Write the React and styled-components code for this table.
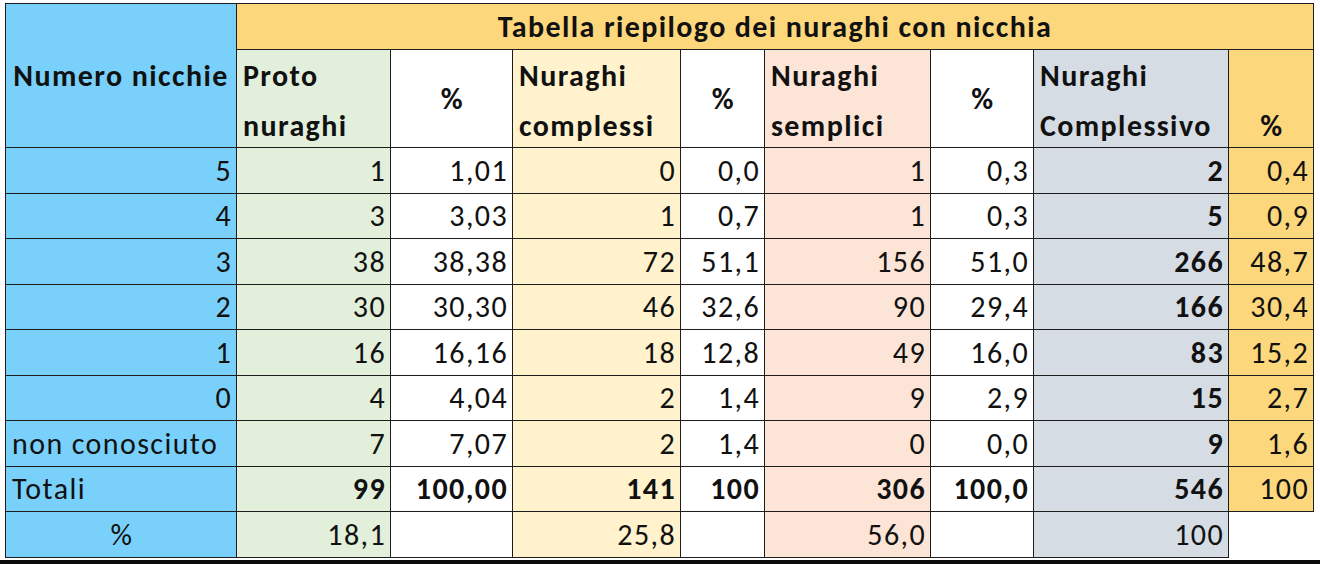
import React from 'react';
import styled, { createGlobalStyle } from 'styled-components';

const GlobalStyle = createGlobalStyle`
  html, body {
    margin: 0;
    padding: 0;
    background: #ffffff;
  }
  body {
    font-family: Carlito, Calibri, Lato, "Liberation Sans", sans-serif;
    color: #111111;
  }
`;

// colonne: etichetta, proto, %, complessi, %, semplici, %, complessivo, %
const WIDTHS = [231, 154, 122, 168, 84, 166, 103, 195, 85];

const BLUE = '#79d1fb';
const GREEN = '#e2efda';
const YELLOW = '#fff2cc';
const PINK = '#fce4d6';
const GREY = '#d6dce4';
const GOLD = '#fdd77c';
const WHITE = '#ffffff';

const COL_BG = [BLUE, GREEN, WHITE, YELLOW, WHITE, PINK, WHITE, GREY, GOLD];

const rows = [
  ['5', '1', '1,01', '0', '0,0', '1', '0,3', '2', '0,4'],
  ['4', '3', '3,03', '1', '0,7', '1', '0,3', '5', '0,9'],
  ['3', '38', '38,38', '72', '51,1', '156', '51,0', '266', '48,7'],
  ['2', '30', '30,30', '46', '32,6', '90', '29,4', '166', '30,4'],
  ['1', '16', '16,16', '18', '12,8', '49', '16,0', '83', '15,2'],
  ['0', '4', '4,04', '2', '1,4', '9', '2,9', '15', '2,7'],
  ['non conosciuto', '7', '7,07', '2', '1,4', '0', '0,0', '9', '1,6'],
];

const totals = ['Totali', '99', '100,00', '141', '100', '306', '100,0', '546', '100'];
const percents = ['%', '18,1', '', '25,8', '', '56,0', '', '100', ''];

const Page = styled.div`
  height: 564px;
  display: flex;
  flex-direction: column;
  overflow: hidden;
`;

const Sheet = styled.div`
  flex: 1;
  padding: 3px 0 0 5px;
`;

const Grid = styled.table`
  border-collapse: collapse;
  table-layout: fixed;
  width: ${WIDTHS.reduce((a, b) => a + b, 0)}px;
  font-size: 30px;
  letter-spacing: 1.4px;
`;

const TitleRow = styled.tr`
  height: 46px;
`;

const HeadRow = styled.tr`
  height: 97px;
`;

const DataRow = styled.tr`
  height: 45.5px;
`;

const Corner = styled.th`
  background: ${BLUE};
  border: 1px solid #1d1d1d;
  font-weight: 700;
  text-align: center;
  vertical-align: middle;
  padding: 0;
  white-space: nowrap;
`;

const Title = styled.th`
  background: ${GOLD};
  border: 1px solid #1d1d1d;
  font-weight: 700;
  text-align: center;
  vertical-align: middle;
  padding: 0;
`;

const HeadCell = styled.th`
  background: ${(p) => p.$bg};
  border: 1px solid #1d1d1d;
  font-weight: 700;
  padding: 0 4px 0 6px;
  text-align: ${(p) => p.$align || 'left'};
`;

const HeadStack = styled.div`
  height: 97px;
  box-sizing: border-box;
  display: flex;
  flex-direction: column;
  justify-content: ${(p) => p.$justify};
  padding: ${(p) => p.$pad || '0'};
  line-height: 1.2;
`;

const Cell = styled.td`
  background: ${(p) => p.$bg};
  border: ${(p) => (p.$bare ? 'none' : '1px solid #1d1d1d')};
  font-weight: ${(p) => (p.$bold ? 700 : 400)};
  text-align: ${(p) => p.$align || 'right'};
  vertical-align: middle;
  padding: 0 4px 0 6px;
  white-space: nowrap;
  overflow: hidden;
`;

const BottomBar = styled.div`
  height: 4px;
  background: #0b0b0b;
`;

const headers = [
  { lines: ['Proto', 'nuraghi'], bg: GREEN },
  { lines: ['%'], bg: WHITE },
  { lines: ['Nuraghi', 'complessi'], bg: YELLOW },
  { lines: ['%'], bg: WHITE },
  { lines: ['Nuraghi', 'semplici'], bg: PINK },
  { lines: ['%'], bg: WHITE },
  { lines: ['Nuraghi', 'Complessivo'], bg: GREY },
  { lines: ['%'], bg: GOLD, bottom: true },
];

const Header = ({ h }) => {
  if (h.lines.length === 2) {
    return (
      <HeadCell $bg={h.bg}>
        <HeadStack $justify="space-between" $pad="8px 0 3px">
          <span>{h.lines[0]}</span>
          <span>{h.lines[1]}</span>
        </HeadStack>
      </HeadCell>
    );
  }
  return (
    <HeadCell $bg={h.bg} $align="center">
      <HeadStack $justify={h.bottom ? 'flex-end' : 'center'} $pad={h.bottom ? '0 0 3px' : '0'}>
        <span>{h.lines[0]}</span>
      </HeadStack>
    </HeadCell>
  );
};

const App = () => {
  return (
    <Page>
      <GlobalStyle />
      <Sheet>
        <Grid>
          <colgroup>
            {WIDTHS.map((w, i) => (
              <col key={i} style={{ width: w }} />
            ))}
          </colgroup>
          <thead>
            <TitleRow>
              <Corner rowSpan={2}>Numero nicchie</Corner>
              <Title colSpan={8}>Tabella riepilogo dei nuraghi con nicchia</Title>
            </TitleRow>
            <HeadRow>
              {headers.map((h, i) => (
                <Header key={i} h={h} />
              ))}
            </HeadRow>
          </thead>
          <tbody>
            {rows.map((r) => (
              <DataRow key={r[0]}>
                {r.map((v, i) => (
                  <Cell
                    key={i}
                    $bg={COL_BG[i]}
                    $bold={i === 7}
                    $align={i === 0 && v.length > 2 ? 'left' : 'right'}
                  >
                    {v}
                  </Cell>
                ))}
              </DataRow>
            ))}
            <DataRow>
              {totals.map((v, i) => (
                <Cell key={i} $bg={COL_BG[i]} $bold={i > 0 && i < 8} $align={i === 0 ? 'left' : 'right'}>
                  {v}
                </Cell>
              ))}
            </DataRow>
            <DataRow>
              {percents.map((v, i) => (
                <Cell
                  key={i}
                  $bg={i === 8 ? WHITE : COL_BG[i]}
                  $bare={i === 8}
                  $align={i === 0 ? 'center' : 'right'}
                >
                  {v}
                </Cell>
              ))}
            </DataRow>
          </tbody>
        </Grid>
      </Sheet>
      <BottomBar />
    </Page>
  );
};

export default App;
